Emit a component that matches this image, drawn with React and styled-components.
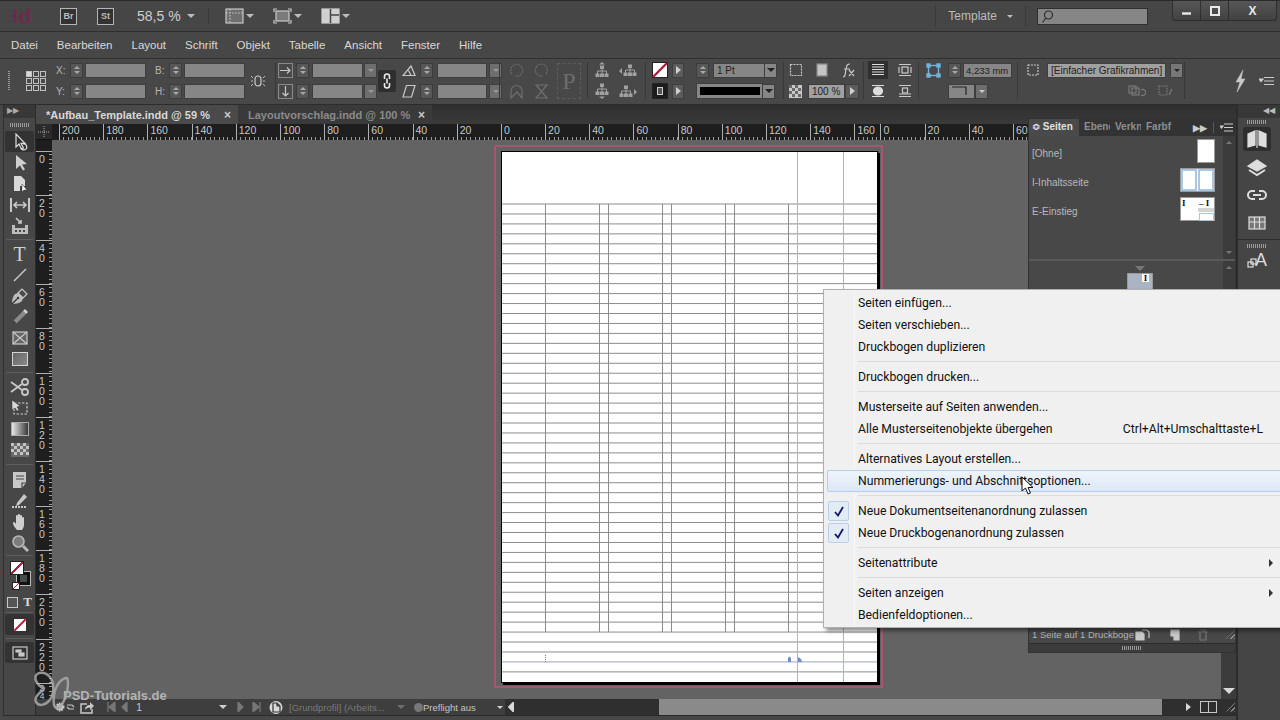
import React from 'react'
import styled, { createGlobalStyle } from 'styled-components'

const GlobalStyle = createGlobalStyle`
  html, body { margin: 0; padding: 0; background: #333; }
  body { font-family: "Liberation Sans", Arial, sans-serif; }
`

const Root = styled.div`
  position: relative;
  width: 1280px;
  height: 720px;
  overflow: hidden;
  display: flex;
  flex-direction: column;
  background: #474747;
  color: #d0d0d0;
`

/* ---------- title bar ---------- */
const TitleBar = styled.div`
  height: 32px;
  flex: none;
  display: flex;
  align-items: center;
  background: #464646;
  border-top: 1px solid #2b2b2b;
  border-bottom: 1px solid #2f2f2f;
  box-sizing: border-box;
  padding-left: 12px;
`
const AppLogo = styled.span`
  width: 48px;
  font-size: 21px;
  font-weight: bold;
  color: #6a2c4b;
  letter-spacing: 1px;
`
const BridgeBox = styled.span`
  width: 15px;
  height: 15px;
  margin-right: 20px;
  border: 1px solid #b5b5b5;
  background: #333;
  font-size: 9px;
  font-weight: bold;
  line-height: 15px;
  text-align: center;
  color: #bdbdbd;
`
const ZoomText = styled.span`
  margin-left: 3px;
  width: 50px;
  font-size: 14px;
  color: #cfcfcf;
`
const TitleIcons = styled.div`
  display: flex;
  align-items: center;
  gap: 19px;
  margin-left: 13px;
  padding-left: 16px;
  border-left: 1px solid #3a3a3a;
  height: 16px;
`
const IconWithCaret = styled.span`
  display: flex;
  align-items: center;
  gap: 2px;
`
const Caret = styled.i`
  display: block;
  width: 0;
  height: 0;
  border-left: ${(p) => p.$s || 4}px solid transparent;
  border-right: ${(p) => p.$s || 4}px solid transparent;
  border-top: ${(p) => p.$s || 4}px solid ${(p) => p.$c || '#bdbdbd'};
`
const TitleRight = styled.div`
  margin-left: auto;
  display: flex;
  align-items: center;
  height: 100%;
`
const WorkspaceName = styled.div`
  display: flex;
  align-items: center;
  gap: 10px;
  height: 20px;
  padding: 0 12px;
  border-left: 1px solid #3a3a3a;
  border-right: 1px solid #3a3a3a;
  font-size: 12px;
  color: #bcbcbc;
`
const SearchBox = styled.div`
  width: 111px;
  height: 17px;
  margin: 0 24px 0 11px;
  padding-left: 3px;
  box-sizing: border-box;
  display: flex;
  align-items: center;
  background: #868686;
  border: 1px solid #303030;
`
const WinControls = styled.div`
  align-self: flex-start;
  display: flex;
  height: 19px;
  margin-right: 3px;
  border: 1px solid #2e2e2e;
  border-top: 0;
  border-radius: 0 0 3px 3px;
  background: linear-gradient(#565656, #414141);
`
const WinBtn = styled.div`
  width: ${(p) => p.$w}px;
  display: flex;
  align-items: center;
  justify-content: center;
  border-left: ${(p) => (p.$first ? '0' : '1px solid #2e2e2e')};
  color: #e8e8e8;
  font-size: 12px;
  font-weight: bold;
`

/* ---------- menu bar ---------- */
const MenuBar = styled.div`
  height: 26px;
  flex: none;
  box-sizing: border-box;
  display: flex;
  align-items: center;
  gap: 19px;
  padding-left: 11px;
  background: #474747;
  font-size: 11.5px;
  color: #d8d8d8;
`

/* ---------- control panel ---------- */
const ControlBar = styled.div`
  height: 47px;
  flex: none;
  box-sizing: border-box;
  display: flex;
  background: #484848;
  border-top: 1px solid #2f2f2f;
  border-bottom: 1px solid #2c2c2c;
  padding: 3px 0 5px;
`
const Cluster = styled.div`
  width: ${(p) => p.$w}px;
  flex: none;
  box-sizing: border-box;
  padding-left: ${(p) => p.$pad || 0}px;
  display: flex;
  flex-direction: ${(p) => (p.$row ? 'row' : 'column')};
  align-items: ${(p) => (p.$row ? 'center' : 'flex-start')};
  justify-content: ${(p) => (p.$row ? 'flex-start' : 'center')};
  gap: ${(p) => (p.$row ? p.$gap || 0 : 6)}px;
  border-left: ${(p) => (p.$sep ? '1px solid #383838' : '0')};
`
const IconStack = styled.div`
  display: flex;
  flex-direction: column;
  gap: 6px;
`
const CtlRow = styled.div`
  height: 15px;
  display: flex;
  align-items: center;
  gap: ${(p) => p.$gap ?? 2}px;
  margin-left: ${(p) => p.$ml || 0}px;
`
const Spacer = styled.span`
  width: ${(p) => p.$w}px;
  flex: none;
`
const CtlLabel = styled.span`
  width: ${(p) => p.$w || 12}px;
  font-size: 10px;
  color: #b5b5b5;
`
const VGrip = styled.i`
  display: block;
  width: 2px;
  height: 20px;
  flex: none;
  background: repeating-linear-gradient(#9a9a9a 0 1px, transparent 1px 2px);
`
const SpinBox = styled.div`
  width: 13px;
  height: 15px;
  flex: none;
  display: flex;
  flex-direction: column;
  align-items: center;
  justify-content: center;
  gap: 2px;
  background: #575757;
  border: 1px solid #3c3c3c;
  box-sizing: border-box;
`
const SpinUp = styled.i`
  width: 0;
  height: 0;
  border-left: 3px solid transparent;
  border-right: 3px solid transparent;
  border-bottom: 3px solid ${(p) => p.$c || '#a8a8a8'};
`
const SpinDown = styled.i`
  width: 0;
  height: 0;
  border-left: 3px solid transparent;
  border-right: 3px solid transparent;
  border-top: 3px solid ${(p) => p.$c || '#a8a8a8'};
`
const Field = styled.div`
  width: ${(p) => p.$w}px;
  height: 15px;
  flex: none;
  box-sizing: border-box;
  padding-left: ${(p) => p.$pad ?? 3}px;
  background: ${(p) => p.$bg || '#868686'};
  border: 1px solid #3e3e3e;
  font-size: ${(p) => p.$fs || 10}px;
  line-height: 13px;
  color: #222;
  white-space: nowrap;
  overflow: hidden;
`
const ArrowCell = styled.div`
  width: 13px;
  height: 15px;
  flex: none;
  margin-left: ${(p) => p.$ml ?? -2}px;
  box-sizing: border-box;
  display: flex;
  align-items: center;
  justify-content: center;
  background: ${(p) => p.$bg || '#6e6e6e'};
  border: 1px solid #3e3e3e;
`
const PlayCell = styled.div`
  width: ${(p) => p.$w || 12}px;
  height: 15px;
  flex: none;
  margin-left: ${(p) => p.$ml || 0}px;
  box-sizing: border-box;
  display: flex;
  align-items: center;
  justify-content: center;
  background: #5c5c5c;
  border: 1px solid #3e3e3e;
`
const PlayTri = styled.i`
  width: 0;
  height: 0;
  border-top: 4px solid transparent;
  border-bottom: 4px solid transparent;
  border-left: 5px solid ${(p) => p.$c || '#d0d0d0'};
`
const ChainButton = styled.div`
  width: 18px;
  height: 22px;
  margin-left: 2px;
  display: flex;
  align-items: center;
  justify-content: center;
  background: #2f2f2f;
  border-radius: 2px;
`
const WrapButton = styled.div`
  width: 20px;
  height: 18px;
  display: flex;
  align-items: center;
  justify-content: center;
  background: ${(p) => (p.$on ? '#2f2f2f' : 'transparent')};
`
const Swatch = styled.div`
  width: 16px;
  height: 16px;
  flex: none;
  box-sizing: border-box;
  background: #1c1c1c;
  border: 1px solid #222;
  display: flex;
  align-items: center;
  justify-content: center;
`
const SwatchCore = styled.span`
  width: 6px;
  height: 8px;
  box-sizing: border-box;
  background: #555;
  border: 1px solid #ccc;
`
const StrokeLine = styled.div`
  width: 66px;
  height: 14px;
  flex: none;
  margin-left: 9px;
  box-sizing: border-box;
  background: #000;
  border: 3px solid #868686;
  outline: 1px solid #3e3e3e;
`
const PBox = styled.div`
  width: 24px;
  height: 36px;
  margin-left: 8px;
  font-family: "Liberation Serif", serif;
  font-size: 24px;
  line-height: 34px;
  text-align: center;
  color: #6d6d6d;
  border: 1px dashed #5c5c5c;
  box-sizing: border-box;
`

/* ---------- work area ---------- */
const Workspace = styled.div`
  flex: 1;
  display: flex;
  min-height: 0;
`
const ToolColumn = styled.div`
  width: 33px;
  flex: none;
  box-sizing: border-box;
  margin: 0 0 4px 3px;
  border-left: 1px solid #303030;
  border-right: 1px solid #2b2b2b;
  border-bottom: 1px solid #2b2b2b;
  background: #474747;
  display: flex;
  flex-direction: column;
  align-items: center;
`
const ToolHead = styled.div`
  width: 100%;
  height: 13px;
  flex: none;
  background: #383838;
  color: #aaa;
  font-size: 8px;
  line-height: 11px;
  padding-left: 3px;
  box-sizing: border-box;
`
const Grip = styled.div`
  width: ${(p) => p.$w || 20}px;
  height: 4px;
  flex: none;
  margin: ${(p) => p.$m || '4px 0'};
  background: repeating-linear-gradient(90deg, #9a9a9a 0 1px, transparent 1px 2px);
`
const Tool = styled.div`
  width: 29px;
  height: ${(p) => p.$h || 21}px;
  flex: none;
  display: flex;
  align-items: center;
  justify-content: center;
  box-sizing: border-box;
  background: ${(p) => (p.$on ? '#333' : 'transparent')};
  border-radius: 2px;
`
const TypeLetter = styled.span`
  font-family: "Liberation Serif", serif;
  font-size: 20px;
  line-height: 20px;
  color: #d0d0d0;
`
const ToolSep = styled.div`
  width: 27px;
  height: 1px;
  flex: none;
  margin: ${(p) => p.$m || 3}px 0;
  background: #5e5e5e;
`
const FillBlock = styled.div`
  position: relative;
  width: 29px;
  height: 35px;
  flex: none;
`
const MiniSwatch = styled.div`
  position: absolute;
  left: ${(p) => p.$x}px;
  top: ${(p) => p.$y}px;
  width: ${(p) => p.$s}px;
  height: ${(p) => p.$s}px;
  box-sizing: border-box;
  border: ${(p) => (p.$dark ? '3px solid #111' : '1px solid #222')};
  background: ${(p) => (p.$dark ? '#4a4a4a' : 'linear-gradient(135deg, #fff 43%, #b01e3c 43% 57%, #fff 57%)')};
  outline: ${(p) => (p.$dark ? '1px solid #bbb' : '0')};
`
const ContainerRow = styled.div`
  display: flex;
  align-items: center;
  gap: 5px;
  height: 18px;
  font-family: "Liberation Serif", serif;
  font-weight: bold;
  font-size: 13px;
  color: #d8d8d8;
`
const ContainerSquare = styled.span`
  width: 9px;
  height: 9px;
  border: 1px solid #c8c8c8;
  background: #555;
`

const DocColumn = styled.div`
  position: relative;
  flex: 1;
  min-width: 0;
  display: flex;
  flex-direction: column;
`
const TabStrip = styled.div`
  height: 19px;
  flex: none;
  display: flex;
  background: linear-gradient(#2f2f2f, #3a3a3a);
`
const DocTab = styled.div`
  width: ${(p) => p.$w}px;
  box-sizing: border-box;
  display: flex;
  align-items: center;
  justify-content: space-between;
  padding: 0 7px 0 10px;
  font-size: 11px;
  font-weight: bold;
  white-space: nowrap;
  background: ${(p) => (p.$on ? '#4a4a4a' : '#3a3a3a')};
  color: ${(p) => (p.$on ? '#d8d8d8' : '#8a8a8a')};
`
const TabClose = styled.span`
  font-size: 12px;
  color: #c8c8c8;
`
const RulerRow = styled.div`
  height: 16px;
  flex: none;
  display: flex;
`
const RulerCorner = styled.div`
  width: 16px;
  flex: none;
  box-sizing: border-box;
  background: #2b2b2b;
  border-bottom: 1px solid #111;
  display: flex;
  align-items: center;
  justify-content: center;
`
const HRuler = styled.div`
  flex: 1;
  display: flex;
  padding-left: 7px;
  background: #1e1e1e;
  overflow: hidden;
`
const HCell = styled.div`
  width: ${(p) => p.$w || 44.2}px;
  flex: none;
  box-sizing: border-box;
  padding-left: 2px;
  border-left: 1px solid #b0b0b0;
  font-size: 10.5px;
  line-height: 13px;
  color: #c8c8c8;
  background: repeating-linear-gradient(90deg, transparent 0 3.42px, #9a9a9a 3.42px 4.42px) bottom left / 100% 3px no-repeat;
`
const MiddleRow = styled.div`
  flex: 1;
  min-height: 0;
  display: flex;
`
const VRuler = styled.div`
  width: 16px;
  flex: none;
  box-sizing: border-box;
  padding-top: 11px;
  background: #1e1e1e;
  overflow: hidden;
`
const VCell = styled.div`
  height: 44.33px;
  box-sizing: border-box;
  padding: ${(p) => (p.$tight ? 1 : 3)}px 0 0 2px;
  font-size: ${(p) => (p.$tight ? 9 : 10.5)}px;
  line-height: ${(p) => (p.$tight ? 8 : 10)}px;
  color: #c8c8c8;
  background:
    linear-gradient(#b0b0b0, #b0b0b0) top left / 100% 1px no-repeat,
    repeating-linear-gradient(180deg, transparent 0 3.43px, #9a9a9a 3.43px 4.43px) top right / 3px 100% no-repeat;
`
const Digit = styled.span`
  display: block;
  width: 8px;
  text-align: center;
`
const Canvas = styled.div`
  flex: 1;
  min-width: 0;
  box-sizing: border-box;
  padding: 5px 0 0 442px;
  background: #636363;
  overflow: hidden;
`
const Bleed = styled.div`
  width: 389px;
  height: 543px;
  box-sizing: border-box;
  padding: 5px 0 0 6px;
  border: 2px solid #a8566f;
`
const Sheet = styled.div`
  width: 375px;
  height: 530px;
  background: #fff;
  box-shadow: 0 0 0 1px #000, 2px 2px 0 1px #000;
`
const SheetDrawing = styled.svg`
  display: block;
`
const VScroll = styled.div`
  width: 15px;
  flex: none;
  display: flex;
  align-items: flex-end;
  justify-content: center;
  padding-bottom: 5px;
  box-sizing: border-box;
  background: #3c3c3c;
`
const StatusRow = styled.div`
  height: 16px;
  flex: none;
  margin-bottom: 4px;
  display: flex;
  align-items: center;
  background: #3e3e3e;
  border-bottom: 1px solid #2a2a2a;
  box-sizing: content-box;
`
const StatusItems = styled.div`
  width: 469px;
  flex: none;
  box-sizing: border-box;
  padding-left: 18px;
  display: flex;
  align-items: center;
  font-size: 10px;
  color: #c4c4c4;
`
const StatusSlot = styled.span`
  width: ${(p) => p.$w}px;
  flex: none;
  display: flex;
  align-items: center;
  white-space: nowrap;
  overflow: hidden;
  font-size: ${(p) => p.$fs || 10}px;
  color: ${(p) => p.$c || 'inherit'};
`
const PreflightDot = styled.i`
  width: 9px;
  height: 9px;
  border-radius: 50%;
  background: #777;
`
const HScroll = styled.div`
  flex: 1;
  height: 100%;
  display: flex;
  align-items: center;
  background: #2f2f2f;
  padding-left: 3px;
`
const ScrollThumb = styled.div`
  width: 503px;
  height: 100%;
  margin-left: 145px;
  background: #8a8a8a;
`
const ScrollEnd = styled.div`
  display: flex;
  align-items: center;
  gap: 9px;
  margin-left: 24px;
`
const SpreadIcon = styled.span`
  width: 15px;
  height: 10px;
  border: 1px solid #c8c8c8;
  background: linear-gradient(90deg, transparent 7px, #c8c8c8 7px 8px, transparent 8px);
`
const Resize = styled.i`
  display: block;
  width: 9px;
  height: 9px;
  background: repeating-linear-gradient(135deg, #8c8c8c 0 1px, transparent 1px 3px);
  clip-path: polygon(100% 0, 100% 100%, 0 100%);
`
const Watermark = styled.div`
  position: absolute;
  left: -5px;
  top: 565px;
  display: flex;
  align-items: flex-end;
  pointer-events: none;
`
const WatermarkText = styled.span`
  margin: 0 0 11px -8px;
  font-size: 13px;
  font-weight: bold;
  color: #b4b4b4;
`

/* ---------- pages panel ---------- */
const Panel = styled.div`
  position: absolute;
  left: 992px;
  top: 13px;
  width: 208px;
  height: 535px;
  box-sizing: border-box;
  display: flex;
  flex-direction: column;
  background: #484848;
  border: 1px solid #333;
`
const PanelTabs = styled.div`
  height: 17px;
  flex: none;
  display: flex;
  align-items: center;
  background: #333;
  font-size: 10px;
  font-weight: bold;
  color: #8f8f8f;
`
const PanelTab = styled.div`
  width: ${(p) => p.$w}px;
  height: 100%;
  flex: none;
  box-sizing: border-box;
  padding-left: ${(p) => p.$pad || 5}px;
  line-height: 16px;
  white-space: nowrap;
  overflow: hidden;
  background: ${(p) => (p.$on ? '#4a4a4a' : 'transparent')};
  color: ${(p) => (p.$on ? '#e0e0e0' : '#8f8f8f')};
`
const PanelTabTools = styled.div`
  margin-left: auto;
  display: flex;
  align-items: center;
  gap: 6px;
  padding-right: 2px;
  font-size: 9px;
  color: #ccc;
`
const PanelTabSep = styled.i`
  width: 1px;
  height: 11px;
  background: #5a5a5a;
`
const PanelBody = styled.div`
  height: 125px;
  flex: none;
  display: flex;
  border-bottom: 2px solid #5a5a5a;
  box-sizing: border-box;
`
const MasterList = styled.div`
  flex: 1;
  display: flex;
  flex-direction: column;
  gap: 5px;
  padding: 3px 8px 0 3px;
`
const MasterRow = styled.div`
  height: 24px;
  display: flex;
  justify-content: space-between;
  font-size: 10px;
  color: #b8b8b8;
`
const MasterName = styled.span`
  margin-top: 9px;
`
const Thumbs = styled.div`
  display: flex;
  box-sizing: border-box;
  border: 1px solid #999;
  background: #fff;
  height: 24px;
`
const Thumb = styled.div`
  width: 16px;
  height: 100%;
  box-sizing: border-box;
  font-family: "Liberation Serif", serif;
  font-size: 9px;
  font-weight: bold;
  color: #111;
  padding-left: 1px;
  line-height: 10px;
  background: #fff;
  border: ${(p) => (p.$margin ? '2px solid #a9c7e0' : '0')};
  & + & {
    margin-left: 1px;
  }
`
const ThumbBand = styled.div`
  height: 4px;
  background: #d4d4d4;
  margin-left: -1px;
`
const ThumbBlue = styled.div`
  height: 6px;
  margin: 1px 0 0 0;
  border: 1px solid #a9c7e0;
`
const PanelScroll = styled.div`
  width: 12px;
  flex: none;
  background: #3c3c3c;
  display: flex;
  flex-direction: column;
  align-items: center;
  justify-content: space-between;
  padding: 5px 0;
  box-sizing: border-box;
`
const PagesArea = styled.div`
  flex: 1;
  display: flex;
`
const PagesInner = styled.div`
  flex: 1;
  display: flex;
  flex-direction: column;
  align-items: center;
  padding: 5px 0 0 28px;
`
const PageThumb = styled.div`
  width: 26px;
  height: 24px;
  margin-top: 2px;
  box-sizing: border-box;
  display: flex;
  justify-content: flex-end;
  padding-right: 3px;
  background: #aab4c4;
  border: 1px solid #999;
`
const PageThumbBadge = styled.span`
  width: 7px;
  height: 8px;
  background: #fff;
  color: #111;
  font-family: "Liberation Serif", serif;
  font-size: 9px;
  font-weight: bold;
  line-height: 8px;
  text-align: center;
`
const PanelFooter = styled.div`
  height: 17px;
  flex: none;
  display: flex;
  align-items: center;
  padding: 0 0 0 3px;
  font-size: 9.5px;
  color: #b4b4b4;
  white-space: nowrap;
  border-bottom: 1px solid #2b2b2b;
`
const FooterText = styled.span`
  width: 103px;
  flex: none;
`
const FooterIcons = styled.div`
  display: flex;
  align-items: center;
  gap: 17px;
`
const PanelGrip = styled.div`
  height: 8px;
  flex: none;
  display: flex;
  align-items: center;
  justify-content: center;
  background: #3c3c3c;
`

/* ---------- dock ---------- */
const Dock = styled.div`
  width: 44px;
  flex: none;
  box-sizing: border-box;
  display: flex;
  flex-direction: column;
  align-items: center;
  padding-right: 4px;
  background: #454545;
  border-left: 2px solid #2c2c2c;
`
const DockHead = styled.div`
  width: 42px;
  margin-right: -4px;
  height: 13px;
  flex: none;
  box-sizing: border-box;
  padding-right: 5px;
  text-align: right;
  font-size: 8px;
  line-height: 11px;
  color: #bbb;
  background: #383838;
`
const DockBtn = styled.div`
  width: 28px;
  height: ${(p) => p.$h || 28}px;
  margin: ${(p) => p.$m || 0};
  flex: none;
  display: flex;
  align-items: center;
  justify-content: center;
  border-radius: 3px;
  background: ${(p) => (p.$on ? '#2e2e2e' : 'transparent')};
`
const DockSep = styled.div`
  width: 42px;
  margin-right: -4px;
  height: 1px;
  flex: none;
  background: #2c2c2c;
`
const DockLetter = styled.span`
  font-size: 18px;
  line-height: 18px;
  margin: -7px 0 0 -2px;
  color: #ddd;
`

/* ---------- context menu ---------- */
const ContextMenu = styled.div`
  position: absolute;
  left: 823px;
  top: 289px;
  width: 457px;
  height: 339px;
  box-sizing: border-box;
  padding: 2px 0 2px 3px;
  border: 1px solid #b0b0b0;
  border-right: 0;
  background: linear-gradient(90deg, #f0f0f0 29px, #e2e3e3 29px, #fff 30px, #f0f0f0 31px);
  box-shadow: 3px 3px 4px rgba(0, 0, 0, 0.45);
  font-family: Roboto, sans-serif;
  font-size: 12.2px;
  color: #111;
`
const MenuItem = styled.div`
  position: relative;
  height: 22px;
  box-sizing: border-box;
  display: flex;
  align-items: center;
  padding: 0 17px 0 30px;
  white-space: nowrap;
  border: 1px solid ${(p) => (p.$hover ? '#aecff7' : 'transparent')};
  border-right: 0;
  border-radius: 2px 0 0 2px;
  background: ${(p) => (p.$hover ? 'linear-gradient(#eef4fc, #dce8f7)' : 'transparent')};
`
const MenuShortcut = styled.span`
  margin-left: auto;
`
const MenuArrow = styled.i`
  position: absolute;
  right: 7px;
  top: 6px;
  border-top: 4px solid transparent;
  border-bottom: 4px solid transparent;
  border-left: 4px solid #333;
`
const CheckBox = styled.span`
  position: absolute;
  left: 0;
  top: 0;
  width: 21px;
  height: 20px;
  box-sizing: border-box;
  display: flex;
  align-items: center;
  justify-content: center;
  background: #e3ebf5;
  border: 1px solid #b9cfe8;
  border-radius: 2px;
  color: #14146e;
`
const MenuRule = styled.div`
  height: 1px;
  margin: 3px 0 4px 31px;
  background: #dcdcdc;
`
const Cursor = styled.svg`
  position: absolute;
  left: 1021px;
  top: 476px;
`

/* ---------- drawings ---------- */
const S = ({ w = 18, h = 18, children, c = '#c8c8c8', sw = 1.2, f = 'none' }) => (
  <svg width={w} height={h} viewBox={`0 0 ${w} ${h}`} fill={f} stroke={c} strokeWidth={sw}>
    {children}
  </svg>
)
const Spinner = () => (
  <SpinBox>
    <SpinUp />
    <SpinDown />
  </SpinBox>
)
const Dropdown = ({ w }) => (
  <>
    <Field $w={w} />
    <ArrowCell>
      <Caret $s={3} $c="#9a9a9a" />
    </ArrowCell>
  </>
)
const NoneSwatch = ({ s = 16 }) => (
  <svg width={s} height={s} viewBox="0 0 16 16">
    <rect x="0.5" y="0.5" width="15" height="15" fill="#fff" stroke="#222" />
    <path d="M1 15 15 1" stroke="#b01e3c" strokeWidth="2.4" />
  </svg>
)

// small org-chart glyph, the triangle says which way it distributes
const Hierarchy = ({ arrow, dx = 0, dy = 0 }) => (
  <S w={18} h={16} c="#a0a0a0" sw={1}>
    <g transform={`translate(${dx} ${dy})`}>
      <path d="M9 5.500v2.500M4.500 11V8h9v3M9 8v3" />
      <rect x="7.500" y="3" width="3" height="2.500" fill="#a0a0a0" />
      <rect x="3" y="11" width="3" height="2.500" fill="#a0a0a0" />
      <rect x="7.500" y="11" width="3" height="2.500" fill="#a0a0a0" />
      <rect x="12" y="11" width="3" height="2.500" fill="#a0a0a0" />
    </g>
    <path d={arrow} fill="#a0a0a0" stroke="none" />
  </S>
)

const hLabels = ['200', '180', '160', '140', '120', '100', '80', '60', '40', '20', '0', '20', '40', '60', '80', '100', '120', '140']
const hLabelsEnd = [{ t: '160', w: 26 }, { t: '0' }, { t: '20' }, { t: '40' }, { t: '60' }]
const vLabels = ['0', '20', '40', '60', '80', '100', '120', '140', '160', '180', '200', '220', '24']

const tableRows = Array.from({ length: 48 }, (_, i) => 52 + i * 9.955)
const tableCols = [43, 97, 106, 160, 169, 223, 232, 286]

const menu = [
  ['Seiten einfügen...'],
  ['Seiten verschieben...'],
  ['Druckbogen duplizieren'],
  null,
  ['Druckbogen drucken...'],
  null,
  ['Musterseite auf Seiten anwenden...'],
  ['Alle Musterseitenobjekte übergehen', { key: 'Ctrl+Alt+Umschalttaste+L' }],
  null,
  ['Alternatives Layout erstellen...'],
  ['Nummerierungs- und Abschnittsoptionen...', { hover: true }],
  null,
  ['Neue Dokumentseitenanordnung zulassen', { check: true }],
  ['Neue Druckbogenanordnung zulassen', { check: true }],
  null,
  ['Seitenattribute', { sub: true }],
  null,
  ['Seiten anzeigen', { sub: true }],
  ['Bedienfeldoptionen...'],
]

export default function App() {
  return (
    <Root>
      <GlobalStyle />
      <TitleBar>
        <AppLogo>Id</AppLogo>
        <BridgeBox>Br</BridgeBox>
        <BridgeBox>St</BridgeBox>
        <ZoomText>58,5 %</ZoomText>
        <Caret />
        <TitleIcons>
          <IconWithCaret>
            <S w={19} h={16}>
              <rect x="1" y="1" width="17" height="14" fill="#6f6f6f" stroke="#c8c8c8" />
              <path d="M1 5h17M5 1v14" stroke="#c8c8c8" strokeDasharray="1.5 1.5" />
            </S>
            <Caret />
          </IconWithCaret>
          <IconWithCaret>
            <S w={19} h={16}>
              <rect x="3" y="3" width="13" height="10" fill="#7a7a7a" />
              <path d="M1 4V1h3M15 1h3v3M18 12v3h-3M4 15H1v-3" />
            </S>
            <Caret />
          </IconWithCaret>
          <IconWithCaret>
            <S w={19} h={16}>
              <rect x="1" y="1" width="17" height="14" fill="#d0d0d0" stroke="#d0d0d0" />
              <path d="M9.5 1v14M9.5 7H18" stroke="#444" strokeWidth="1.5" />
            </S>
            <Caret />
          </IconWithCaret>
        </TitleIcons>
        <TitleRight>
          <WorkspaceName>
            Template
            <Caret $s={3} />
          </WorkspaceName>
          <SearchBox>
            <S w={13} h={13} c="#2e2e2e">
              <circle cx="7.5" cy="5" r="4" />
              <path d="M5 8 1.5 12.5" />
            </S>
          </SearchBox>
          <WinControls>
            <WinBtn $w={27} $first>
              <S w={11} h={9} c="#e8e8e8" sw={2.4}>
                <path d="M1 7.5h9" />
              </S>
            </WinBtn>
            <WinBtn $w={27}>
              <S w={10} h={10} c="#e8e8e8" sw={2}>
                <rect x="1" y="1" width="8" height="8" />
              </S>
            </WinBtn>
            <WinBtn $w={47}>X</WinBtn>
          </WinControls>
        </TitleRight>
      </TitleBar>

      <MenuBar>
        {['Datei', 'Bearbeiten', 'Layout', 'Schrift', 'Objekt', 'Tabelle', 'Ansicht', 'Fenster', 'Hilfe'].map((m) => (
          <span key={m}>{m}</span>
        ))}
      </MenuBar>

      <ControlBar>
        <Cluster $w={52} $pad={8} $row $gap={16}>
          <VGrip />
          <S w={20} h={20} c="#c0c0c0" sw={1}>
            <rect x="0.5" y="0.5" width="5" height="5" fill="#d8d8d8" />
            {[7.5, 14.5].map((x) => <rect key={x} x={x} y="0.5" width="5" height="5" />)}
            {[7.5, 14.5].map((y) => [0.5, 7.5, 14.5].map((x) => <rect key={`${x}-${y}`} x={x} y={y} width="5" height="5" />))}
          </S>
        </Cluster>
        <Cluster $w={99} $pad={4}>
          <CtlRow><CtlLabel>X:</CtlLabel><Spinner /><Field $w={61} /></CtlRow>
          <CtlRow><CtlLabel>Y:</CtlLabel><Spinner /><Field $w={61} /></CtlRow>
        </Cluster>
        <Cluster $w={97} $pad={4}>
          <CtlRow><CtlLabel>B:</CtlLabel><Spinner /><Field $w={61} /></CtlRow>
          <CtlRow><CtlLabel>H:</CtlLabel><Spinner /><Field $w={61} /></CtlRow>
        </Cluster>
        <Cluster $w={27} $pad={2} $row>
          <S w={16} h={16}>
            <path d="M5 6a3 3 0 0 1 6 0v4a3 3 0 0 1-6 0z" />
            <path d="M1 3l2 2M15 3l-2 2M1 13l2-2M15 13l-2-2M1 8h2M13 8h2" strokeWidth="0.9" />
          </S>
        </Cluster>
        <Cluster $w={101} $pad={2} $sep>
          <CtlRow $gap={3}>
            <S w={15} h={15}>
              <rect x="0.5" y="0.5" width="14" height="14" strokeDasharray="1 1" />
              <path d="M2 7.5h10M9 4.5l3 3-3 3" />
            </S>
            <Spinner />
            <Dropdown w={51} />
          </CtlRow>
          <CtlRow $gap={3}>
            <S w={15} h={15}>
              <rect x="0.5" y="0.5" width="14" height="14" strokeDasharray="1 1" />
              <path d="M7.5 2v10M4.5 9l3 3 3-3" />
            </S>
            <Spinner />
            <Dropdown w={51} />
          </CtlRow>
        </Cluster>
        <Cluster $w={23} $row>
          <ChainButton>
            <S w={10} h={16} c="#e8e8e8" sw={1.6}>
              <path d="M2.5 6V3.5a2.5 2.5 0 0 1 5 0V6M2.5 10v2.5a2.5 2.5 0 0 0 5 0V10M5 5.5v5" />
            </S>
          </ChainButton>
        </Cluster>
        <Cluster $w={100} $pad={3}>
          <CtlRow $gap={4}>
            <S w={14} h={14}>
              <path d="M1 12.5h12L9 3zM6.5 7.5l2.5 5" />
            </S>
            <Spinner />
            <Dropdown w={50} />
          </CtlRow>
          <CtlRow $gap={4}>
            <S w={14} h={14}>
              <path d="M1 13 4.5 1.5h8.5L9.500 13z" />
            </S>
            <Spinner />
            <Dropdown w={50} />
          </CtlRow>
        </Cluster>
        <Cluster $w={88} $pad={9} $row $sep>
          <IconStack>
            <CtlRow $gap={10}>
              <S w={15} h={15} c="#6e6e6e"><path d="M3 11a6 6 0 1 1 3 2" strokeDasharray="2 1" /></S>
              <S w={15} h={15} c="#6e6e6e"><path d="M12 11a6 6 0 1 0-3 2" strokeDasharray="2 1" /></S>
            </CtlRow>
            <CtlRow $gap={10}>
              <S w={15} h={15} c="#6e6e6e"><path d="M2 14V7a5 5 0 0 1 11 0v7L8 8z" /></S>
              <S w={15} h={15} c="#6e6e6e"><path d="M2 1h11L2 14h11z" /></S>
            </CtlRow>
          </IconStack>
          <PBox>P</PBox>
        </Cluster>
        <Cluster $w={58} $pad={5} $sep>
          <CtlRow $gap={8}>
            <Hierarchy arrow="M9 0l3 2.500H6z" dy={1} />
            <Hierarchy arrow="M0 9l3-3v6z" dx={2} />
          </CtlRow>
          <CtlRow $gap={8}>
            <Hierarchy arrow="M9 16l3-2.500H6z" dy={-2} />
            <Hierarchy arrow="M18 9l-3-3v6z" dx={-2} />
          </CtlRow>
        </Cluster>
        <Cluster $w={138} $pad={6} $sep>
          <CtlRow $gap={4}>
            <NoneSwatch />
            <PlayCell><PlayTri /></PlayCell>
            <Spacer $w={4} />
            <Spinner />
            <Field $w={52}>1 Pt</Field>
            <ArrowCell $ml={-5} $bg="#868686"><Caret $s={4} $c="#222" /></ArrowCell>
          </CtlRow>
          <CtlRow $gap={4}>
            <Swatch><SwatchCore /></Swatch>
            <PlayCell><PlayTri /></PlayCell>
            <StrokeLine />
            <ArrowCell $ml={-5} $bg="#868686"><Caret $s={4} $c="#222" /></ArrowCell>
          </CtlRow>
        </Cluster>
        <Cluster $w={80} $pad={5} $sep>
          <CtlRow $gap={11}>
            <S w={15} h={15}><rect x="1.5" y="1.5" width="11" height="11" strokeDasharray="2 1" /></S>
            <S w={15} h={15} c="#888"><rect x="2" y="1" width="10" height="12" fill="#c4c4c4" /></S>
            <S w={16} h={15} c="#c8c8c8"><path d="M2 14c3 0 2-4 3-8s1-5 4-5M3 6h6M8 7l5 6M13 7l-5 6" /></S>
          </CtlRow>
          <CtlRow $gap={6}>
            <svg width="13" height="13" viewBox="0 0 13 13">
              <rect width="13" height="13" fill="#c8c8c8" />
              <path d="M0 0h3v3H0zM6 0h3v3H6zM3 3h3v3H3zM9 3h3v3H9zM0 6h3v3H0zM6 6h3v3H6zM3 9h3v3H3zM9 9h3v3H9z" fill="#6a6a6a" />
            </svg>
            <Field $w={37} $bg="#a0a0a0">100 %</Field>
            <PlayCell $ml={-6} $w={14}><PlayTri /></PlayCell>
          </CtlRow>
        </Cluster>
        <Cluster $w={55} $pad={4} $sep>
          <CtlRow $gap={10}>
            <WrapButton $on>
              <S w={14} h={14} c="#ddd"><path d="M1 1.500h12M1 4h12M1 6.500h12M1 9h12M1 11.500h12" /></S>
            </WrapButton>
            <S w={14} h={14}><path d="M1 1.500h12M1 12.500h12M1 4v6M13 4v6" /><rect x="4" y="4" width="6" height="6" /></S>
          </CtlRow>
          <CtlRow $gap={10}>
            <WrapButton>
              <S w={14} h={14} c="#ddd"><path d="M1 1.500h12M1 12.500h12" /><ellipse cx="7" cy="7" rx="4.500" ry="4" fill="#ddd" /></S>
            </WrapButton>
            <S w={14} h={14}><path d="M1 1.500h12M1 12.500h12M1 10h12" /><rect x="4.500" y="4" width="5" height="5" /></S>
          </CtlRow>
        </Cluster>
        <Cluster $w={99} $pad={7} $sep>
          <CtlRow $gap={2}>
            <S w={15} h={15} c="#6fb4dc" sw={1.4}>
              <rect x="2.500" y="2.500" width="10" height="10" />
              <rect x="1" y="1" width="3" height="3" fill="#6fb4dc" />
              <rect x="11" y="1" width="3" height="3" fill="#6fb4dc" />
              <rect x="1" y="11" width="3" height="3" fill="#6fb4dc" />
              <rect x="11" y="11" width="3" height="3" fill="#6fb4dc" />
            </S>
            <Spacer $w={3} />
            <Spinner />
            <Field $w={49} $pad={2} $fs={9.500}>4,233 mm</Field>
          </CtlRow>
          <CtlRow $ml={22}>
            <Field $w={27}>
              <S w={18} h={10} c="#222"><path d="M0 2h14v8" /></S>
            </Field>
            <ArrowCell><Caret $s={3} $c="#ccc" /></ArrowCell>
          </CtlRow>
        </Cluster>
        <Cluster $w={167} $pad={8} $sep>
          <CtlRow $gap={6}>
            <S w={15} h={15}><rect x="2" y="2" width="10" height="10" strokeDasharray="2 1" /></S>
            <Field $w={119} $bg="#a0a0a0">[Einfacher Grafikrahmen]</Field>
            <ArrowCell $bg="#777"><Caret $s={3} $c="#222" /></ArrowCell>
          </CtlRow>
          <CtlRow $ml={102} $gap={12}>
            <S w={18} h={12} c="#7a7a7a"><rect x="1" y="1" width="7" height="7" /><rect x="4" y="3" width="7" height="7" /><path d="M13 5a3 3 0 1 1 0 5" /></S>
            <S w={16} h={12} c="#7a7a7a"><rect x="1" y="1" width="8" height="9" strokeDasharray="1.500 1" /><path d="M11 10l3-6" /></S>
          </CtlRow>
        </Cluster>
        <Cluster $w={96} $pad={48} $row $gap={12} $sep>
          <S w={14} h={24} c="#c8c8c8" f="#c8c8c8" sw={0.5}><path d="M10 1 3 13h4l-3 10 8-13H8z" /></S>
          <S w={15} h={10} c="#ccc"><path d="M5 1.500h10M5 5h10M5 8.500h10" /><path d="M0 3h4L2 5.500z" fill="#ccc" /></S>
        </Cluster>
      </ControlBar>

      <Workspace>
        <ToolColumn>
          <ToolHead>▶▶</ToolHead>
          <Grip $m="5px 0 4px" />
          <Tool $on>
            <S><path d="M5 1v13l3-3 2.400 5 2-1-2.400-4.600H14z" stroke="#ddd" /><path d="M12 11a3 3 0 1 1-2 4" stroke="#ddd" /></S>
          </Tool>
          <Tool><S><path d="M5 1v14l4-3.500 3 5 2-1-3-5 5-.5z" fill="#cfcfcf" stroke="none" /></S></Tool>
          <Tool>
            <S><path d="M3 1h7l4 4v6H9v5H3z" fill="#d8d8d8" stroke="none" /><path d="M11 9v8l2-2 3 0z" fill="#fff" stroke="#333" strokeWidth="0.5" /></S>
          </Tool>
          <Tool>
            <S w={22} h={18}><path d="M2 2v14M20 2v14" strokeWidth="2" /><path d="M5 9h12M8 6 5 9l3 3M14 6l3 3-3 3" strokeWidth="1.600" /></S>
          </Tool>
          <Tool>
            <S w={20} h={18}><path d="M2 8v9h16V8h-3v3H5V8z" fill="#bdbdbd" stroke="none" /><path d="M6 1l5 5M11 3v3H8" strokeWidth="1.600" /><path d="M5 14h2M9 14h2M13 14h2" stroke="#444" strokeWidth="2" /></S>
          </Tool>
          <ToolSep />
          <Tool><TypeLetter>T</TypeLetter></Tool>
          <Tool><S><path d="M3 15 15 3" strokeWidth="1.400" /></S></Tool>
          <Tool>
            <S><path d="M1 17c0-5 1-8 3-10l3-1 5 5-1 3c-2 2-5 3-10 3z" fill="#bcbcbc" stroke="none" /><path d="M7 6l4-4 5 5-4 4z" fill="#4a4a4a" stroke="#c8c8c8" /><path d="M1 17l5-5" stroke="#333" /><circle cx="7" cy="11" r="1.200" fill="#333" stroke="none" /></S>
          </Tool>
          <Tool>
            <S><path d="M2 16l1-4L12 3l3 3-9 9z" fill="#8a8a8a" stroke="none" /><path d="M12 3l2-2 3 3-2 2z" fill="#d0d0d0" stroke="none" /><path d="M2 16l1-3 2 2z" fill="#222" stroke="none" /></S>
          </Tool>
          <Tool><S><rect x="2" y="3" width="14" height="12" fill="#666" /><path d="M2 3l14 12M16 3 2 15" /></S></Tool>
          <Tool>
            <svg width="18" height="16" viewBox="0 0 18 16">
              <defs>
                <linearGradient id="rectFill" x1="0" y1="0" x2="1" y2="1">
                  <stop offset="0" stopColor="#666" />
                  <stop offset="1" stopColor="#8a8a8a" />
                </linearGradient>
              </defs>
              <rect x="1.500" y="1.500" width="15" height="13" fill="url(#rectFill)" stroke="#d4d4d4" />
            </svg>
          </Tool>
          <ToolSep />
          <Tool>
            <S w={20} h={18}><circle cx="15" cy="4" r="3" strokeWidth="1.800" /><circle cx="15" cy="14" r="3" strokeWidth="1.800" /><path d="M1 4l11 8M1 14l11-8" strokeWidth="1.800" /></S>
          </Tool>
          <Tool>
            <S w={20} h={18}><rect x="4" y="4" width="13" height="11" strokeDasharray="2.500 1.500" /><path d="M2 1v10l3-2 2 3 2-1-2-3 3-1z" fill="#d8d8d8" stroke="#333" strokeWidth="0.5" /></S>
          </Tool>
          <Tool>
            <svg width="18" height="14" viewBox="0 0 18 14">
              <defs>
                <linearGradient id="gradTool">
                  <stop offset="0" stopColor="#eee" />
                  <stop offset="1" stopColor="#333" />
                </linearGradient>
              </defs>
              <rect x="0.500" y="0.500" width="17" height="13" fill="url(#gradTool)" stroke="#aaa" />
            </svg>
          </Tool>
          <Tool>
            <svg width="18" height="14" viewBox="0 0 18 14">
              <rect width="18" height="14" fill="#6a6a6a" />
              <path d="M0 0h3v3H0zM6 0h3v3H6zM12 0h3v3h-3zM3 3h3v3H3zM9 3h3v3H9zM15 3h3v3h-3zM0 6h3v3H0zM6 6h3v3H6zM12 6h3v3h-3zM3 9h3v3H3zM9 9h3v3H9zM15 9h3v3h-3z" fill="#c4c4c4" />
            </svg>
          </Tool>
          <ToolSep $m={4} />
          <Tool>
            <S><path d="M2 1h13v11l-4 5H2z" fill="#c8c8c8" stroke="none" /><path d="M5 5h8M5 8h8" stroke="#444" /><path d="M11 17v-5h5" stroke="#444" /></S>
          </Tool>
          <Tool>
            <S w={20} h={18}><path d="M14 2l3 3-8 8-3 1 1-3z" fill="#c8c8c8" stroke="none" /><path d="M2 15h14" strokeDasharray="2 1" strokeWidth="2" /></S>
          </Tool>
          <Tool>
            <S><path d="M6 17c-2-2-4-5-4-7s2-1 3 1V3c0-1.500 2-1.500 2 0V2c0-1.500 2-1.500 2 0v1c0-1.500 2-1.500 2 0v2c0-1.500 2-1.500 2 0v7c0 2-1 3-2 5z" fill="#cfcfcf" stroke="none" /></S>
          </Tool>
          <Tool>
            <S><circle cx="7.500" cy="7.500" r="5.500" fill="#7c7c7c" stroke="#b8b8b8" strokeWidth="1.600" /><path d="M12 12l5 5" strokeWidth="3" stroke="#b8b8b8" /></S>
          </Tool>
          <ToolSep $m={2} />
          <FillBlock>
            <MiniSwatch $x={12} $y={14} $s={13} $dark />
            <MiniSwatch $x={5} $y={3} $s={14} />
            <MiniSwatch $x={7} $y={24} $s={8} />
          </FillBlock>
          <ContainerRow><ContainerSquare />T</ContainerRow>
          <ToolSep $m={1} />
          <Tool $on><NoneSwatch s={14} /></Tool>
          <ToolSep $m={3} />
          <Tool $on>
            <S w={16} h={14}><rect x="1" y="1" width="14" height="12" /><rect x="4" y="4" width="5" height="2" fill="#c8c8c8" /><rect x="7" y="7" width="5" height="3" fill="#c8c8c8" /></S>
          </Tool>
        </ToolColumn>

        <DocColumn>
          <TabStrip>
            <DocTab $w={202} $on>
              *Aufbau_Template.indd @ 59 %
              <TabClose>×</TabClose>
            </DocTab>
            <DocTab $w={194}>
              Layoutvorschlag.indd @ 100 %
              <TabClose>×</TabClose>
            </DocTab>
          </TabStrip>
          <RulerRow>
            <RulerCorner>
              <S w={12} h={12} c="#aaa" sw={1}><path d="M0 6h12M6 0v12" strokeDasharray="1 1" /></S>
            </RulerCorner>
            <HRuler>
              {hLabels.map((l, i) => <HCell key={i}>{l}</HCell>)}
              {hLabelsEnd.map((l, i) => <HCell key={i} $w={l.w}>{l.t}</HCell>)}
            </HRuler>
          </RulerRow>
          <MiddleRow>
            <VRuler>
              {vLabels.map((l) => (
                <VCell key={l} $tight={l === '24'}>
                  {l.split('').map((d, i) => <Digit key={i}>{d}</Digit>)}
                </VCell>
              ))}
            </VRuler>
            <Canvas>
              <Bleed>
                <Sheet>
                  <SheetDrawing width="375" height="530" viewBox="0 0 375 530">
                    {tableRows.map((y, i) => (
                      <line key={i} x1="0" x2="375" y1={y} y2={y} stroke={i === 46 ? '#97a6be' : '#8c8c8c'} />
                    ))}
                    {tableCols.map((x) => (
                      <line key={x} x1={x + 0.5} x2={x + 0.5} y1="52" y2="480" stroke="#8c8c8c" />
                    ))}
                    {[295, 341].map((x) => (
                      <line key={x} x1={x + 0.5} x2={x + 0.5} y1="0" y2="530" stroke="#b4b4b4" />
                    ))}
                    <line x1="43.500" x2="43.500" y1="503" y2="510" stroke="#777" strokeDasharray="1 1" />
                    <path d="M286 510v-4l1.500-1.500 1.500 1.500v4zM296 510v-5l3 2 1 3z" fill="#6d8ec4" />
                  </SheetDrawing>
                </Sheet>
              </Bleed>
            </Canvas>
            <VScroll><Caret $s={6} $c="#d8d8d8" /></VScroll>
          </MiddleRow>
          <StatusRow>
            <StatusItems>
              <StatusSlot $w={26}>
                <S w={22} h={12}><circle cx="6" cy="6" r="3.500" fill="#bbb" strokeDasharray="1.500 1" strokeWidth="2" /><path d="M13 4h5l2 2M20 8h-5l-2-2" /></S>
              </StatusSlot>
              <StatusSlot $w={27}>
                <S w={15} h={13}><path d="M12 8v4H1V3h6" strokeWidth="1.500" /><path d="M5 9c0-3 2-5 5-5V1l4 4-4 4V6.500c-2 0-4 1-5 2.500z" fill="#c8c8c8" stroke="none" /></S>
              </StatusSlot>
              <StatusSlot $w={14}>
                <S w={9} h={10} c="#777" f="#777"><path d="M1 0v10M8 0v10L2 5z" /></S>
              </StatusSlot>
              <StatusSlot $w={15}>
                <S w={7} h={10} c="#777" f="#777"><path d="M6 0v10L1 5z" /></S>
              </StatusSlot>
              <StatusSlot $w={83} $fs={11}>1</StatusSlot>
              <StatusSlot $w={18}><Caret $s={4} $c="#cfcfcf" /></StatusSlot>
              <StatusSlot $w={15}>
                <S w={7} h={10} c="#777" f="#777"><path d="M1 0v10L6 5z" /></S>
              </StatusSlot>
              <StatusSlot $w={17}>
                <S w={9} h={10} c="#777" f="#777"><path d="M8 0v10M1 0v10L7 5z" /></S>
              </StatusSlot>
              <StatusSlot $w={20}>
                <S w={15} h={15} c="#333"><circle cx="7" cy="7.500" r="6.500" fill="#d8d8d8" stroke="none" /><path d="M4 3h4l3 3v6H4zM8 3v3h3" /></S>
              </StatusSlot>
              <StatusSlot $w={108} $c="#7a7a7a" $fs={9.500}>[Grundprofil] (Arbeits...</StatusSlot>
              <StatusSlot $w={17}><Caret $s={4} $c="#6e6e6e" /></StatusSlot>
              <StatusSlot $w={9}><PreflightDot /></StatusSlot>
              <StatusSlot $w={74} $fs={9.500}>Preflight aus</StatusSlot>
              <StatusSlot $w={8}><Caret $s={3} $c="#cfcfcf" /></StatusSlot>
            </StatusItems>
            <HScroll>
              <S w={6} h={10} c="#d8d8d8" f="#d8d8d8"><path d="M5.500 0v10L0.500 5z" /></S>
              <ScrollThumb />
              <ScrollEnd>
                <PlayTri $c="#d8d8d8" />
                <SpreadIcon />
                <Resize />
              </ScrollEnd>
            </HScroll>
          </StatusRow>

          <Watermark>
            <svg width="40" height="44" viewBox="0 0 40 44" fill="none" stroke="#a8a8a8" strokeWidth="2.500" opacity="0.85">
              <path d="M6 4c6-3 14 0 16 10 1 6 0 12-4 17-4 4-10 6-13 1-2-4 3-10 8-12" />
              <path d="M6 4C2 8 6 16 14 19" />
              <path d="M36 8c-6 0-12 8-13 18-1 7 0 12 3 12 4 0 8-8 10-16 1-6 2-11 0-14z" />
            </svg>
            <WatermarkText>PSD-Tutorials.de</WatermarkText>
          </Watermark>

          <Panel>
            <PanelTabs>
              <PanelTab $w={50} $on $pad={3}>≎ Seiten</PanelTab>
              <PanelTab $w={31}>Ebene</PanelTab>
              <PanelTab $w={31}>Verkn</PanelTab>
              <PanelTab $w={31}>Farbf</PanelTab>
              <PanelTabTools>
                <span>▶▶</span>
                <PanelTabSep />
                <S w={13} h={9} c="#ccc"><path d="M4 1h9M4 4.500h9M4 8h9" /><path d="M0 3h3L1.500 5z" fill="#ccc" /></S>
              </PanelTabTools>
            </PanelTabs>
            <PanelBody>
              <MasterList>
                <MasterRow>
                  <MasterName>[Ohne]</MasterName>
                  <Thumbs><Thumb /></Thumbs>
                </MasterRow>
                <MasterRow>
                  <MasterName>I-Inhaltsseite</MasterName>
                  <Thumbs><Thumb $margin /><Thumb $margin /></Thumbs>
                </MasterRow>
                <MasterRow>
                  <MasterName>E-Einstieg</MasterName>
                  <Thumbs>
                    <Thumb>I</Thumb>
                    <Thumb>– I<ThumbBand /><ThumbBlue /></Thumb>
                  </Thumbs>
                </MasterRow>
              </MasterList>
              <PanelScroll>
                <SpinUp $c="#777" />
                <SpinDown $c="#777" />
              </PanelScroll>
            </PanelBody>
            <PagesArea>
              <PagesInner>
                <Caret $s={5} $c="#777" />
                <PageThumb><PageThumbBadge>I</PageThumbBadge></PageThumb>
              </PagesInner>
              <PanelScroll>
                <SpinUp $c="#777" />
                <SpinDown $c="#777" />
              </PanelScroll>
            </PagesArea>
            <PanelFooter>
              <FooterText>1 Seite auf 1 Druckboge</FooterText>
              <FooterIcons>
                <S w={16} h={12}><path d="M1 3h6l2 2v6H1z" fill="#c8c8c8" /><path d="M7 1h5l2 2v6" /></S>
                <S w={12} h={12} c="#c8c8c8"><path d="M3 1h8v10H6V7H3z" fill="#c8c8c8" /></S>
                <S w={12} h={12} c="#777"><path d="M1 3h10M3 3v8h6V3M4 1h4v2" /></S>
                <Resize />
              </FooterIcons>
            </PanelFooter>
            <PanelGrip><Grip $w={20} $m="0" /></PanelGrip>
          </Panel>
        </DocColumn>

        <Dock>
          <DockHead>◀◀</DockHead>
          <Grip $m="2px 0 3px" />
          <DockBtn $on $h={24}>
            <S w={20} h={18} c="#ddd" f="#ddd"><path d="M1 4l7-3v14l-7 2zM19 4l-7-3v14l7 2z" /><path d="M10 0v18" stroke="#ddd" /></S>
          </DockBtn>
          <DockBtn $h={30} $m="2px 0 0">
            <S w={20} h={18} c="#ddd"><path d="M10 1l9 6-9 5-9-5z" fill="#ddd" /><path d="M2 11l8 5 8-5" strokeWidth="2" /></S>
          </DockBtn>
          <DockBtn $h={24}>
            <S w={20} h={14} c="#ddd" sw={2}><path d="M8 3H5a4 4 0 0 0 0 8h3M12 3h3a4 4 0 0 1 0 8h-3M6 7h8" /></S>
          </DockBtn>
          <DockBtn $h={32}>
            <S w={18} h={14} c="#ddd"><rect x="1" y="1" width="16" height="12" fill="#777" /><path d="M1 6h16M6.500 1v12M11.500 1v12" /></S>
          </DockBtn>
          <DockSep />
          <Grip $m="4px 0 3px" />
          <DockBtn $h={24}>
            <S w={10} h={10} c="#ddd"><rect x="1" y="4" width="5" height="5" /><rect x="4" y="1" width="5" height="5" /></S>
            <DockLetter>A</DockLetter>
          </DockBtn>
        </Dock>
      </Workspace>

      <ContextMenu>
        {menu.map((m, i) => {
          if (!m) return <MenuRule key={i} />
          const [label, o = {}] = m
          return (
            <MenuItem key={label} $hover={o.hover}>
              {o.check && (
                <CheckBox>
                  <S w={12} h={12} c="#14146e" sw={1.800}><path d="M2 7l3 3.500L10 2" /></S>
                </CheckBox>
              )}
              {label}
              {o.key && <MenuShortcut>{o.key}</MenuShortcut>}
              {o.sub && <MenuArrow />}
            </MenuItem>
          )
        })}
      </ContextMenu>
      <Cursor width="13" height="19" viewBox="0 0 13 19">
        <path d="M1 1v14l3.500-3 2.500 6 2.500-1-2.500-5.500H12z" fill="#fff" stroke="#111" />
      </Cursor>
    </Root>
  )
}
